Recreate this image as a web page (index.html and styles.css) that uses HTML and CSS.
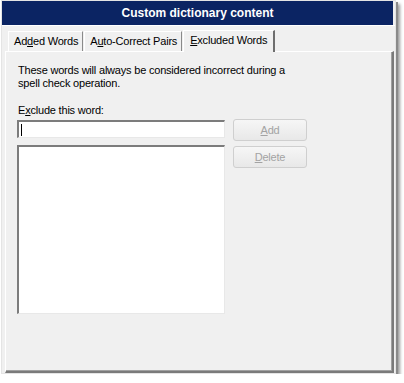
FILE: index.html
```html
<!DOCTYPE html>
<html lang="en">
<head>
  <meta charset="UTF-8">
  <title>Custom dictionary content</title>
  <link rel="stylesheet" href="styles.css">
</head>
<body>
  <div class="dialog">
    <div class="titlebar">Custom dictionary content</div>

    <!-- Tab strip -->
    <div class="tabs">
      <div class="tab">Ad<u>d</u>ed Words</div>
      <div class="tab">A<u>u</u>to-Correct Pairs</div>
      <div class="tab active"><u>E</u>xcluded Words</div>
    </div>

    <div class="panel">
      <p class="hint">These words will always be considered incorrect during a spell check operation.</p>
      <div class="label">E<u>x</u>clude this word:</div>
      <div class="editor">
        <div class="fields">
          <div class="input"><span class="caret"></span></div>
          <div class="list"></div>
        </div>
        <div class="buttons">
          <button disabled><u>A</u>dd</button>
          <button disabled><u>D</u>elete</button>
        </div>
      </div>
    </div>
  </div>
</body>
</html>
```

FILE: styles.css
```css
body {
  margin: 0;
  background: #ffffff;
  font-family: "Liberation Sans", Arial, sans-serif;
  font-size: 11px;
  letter-spacing: -0.2px;
  color: #000000;
}
.dialog {
  box-sizing: border-box;
  width: 395px;
  height: 374px;
  margin-left: 1px;
  border: 1px solid #e4e4e4;
  background: #f0f0f0;
  box-shadow: 2px 2px 0 #8a8a8a, 4px 4px 3px rgba(0,0,0,0.4);
}
.titlebar {
  height: 24px;
  line-height: 25px;
  background: #0b2463;
  color: #ffffff;
  font-weight: bold;
  font-size: 12px;
  letter-spacing: 0;
  text-align: center;
  border-right: 2px solid #f0f0f0;
}
.tabs {
  display: flex;
  align-items: flex-end;
  height: 26px;
  padding-left: 6px;
  border-top: 1px solid #ffffff;
  box-sizing: border-box;
}
.tab {
  height: 20px;
  line-height: 19px;
  padding: 0 4px 0 5px;
  border-top: 1px solid #ffffff;
  border-left: 1px solid #ffffff;
  border-right: 1px solid #8a8a8a;
  box-sizing: border-box;
  white-space: nowrap;
}
.tab + .tab {
  margin-left: 1px;
}
.tab.active {
  height: 22px;
  padding: 0 6px 0 6px;
  border-right: 2px solid #6e6e6e;
  background: #f0f0f0;
  position: relative;
  top: 1px;
}
.panel {
  box-sizing: border-box;
  height: 322px;
  margin: 0 0 0 3px;
  width: 389px;
  padding: 12px 11px 0 11px;
  border-top: 1px solid #ffffff;
  border-left: 1px solid #ffffff;
  border-right: 2px solid #7a7a7a;
  border-bottom: 2px solid #7a7a7a;
  box-shadow: inset -1px -1px 0 #a0a0a0;
}
.hint {
  margin: 0 0 0 1px;
  line-height: 13px;
  width: 290px;
}
.label {
  margin: 14px 0 0 1px;
  line-height: 13px;
}
.editor {
  display: flex;
  gap: 8px;
  margin-top: 3px;
}
.fields {
  display: flex;
  flex-direction: column;
  gap: 7px;
}
.input,
.list {
  box-sizing: border-box;
  width: 208px;
  background: #ffffff;
  border-top: 2px solid #7c7c7c;
  border-left: 2px solid #7c7c7c;
  border-right: 1px solid #e8e8e8;
  border-bottom: 1px solid #e8e8e8;
}
.input {
  height: 18px;
  padding: 2px 0 0 2px;
}
.caret {
  display: block;
  width: 1px;
  height: 12px;
  background: #000000;
}
.list {
  height: 169px;
}
.buttons {
  display: flex;
  flex-direction: column;
  gap: 5px;
  margin-top: -1px;
}
.buttons button {
  width: 74px;
  height: 22px;
  padding: 0;
  font-family: "Liberation Sans", Arial, sans-serif;
  font-size: 11px;
  letter-spacing: -0.2px;
  color: #a3a3a3;
  background: linear-gradient(#f6f6f6, #e8e8e8);
  border: 1px solid #cfcfcf;
  border-radius: 3px;
}
```
